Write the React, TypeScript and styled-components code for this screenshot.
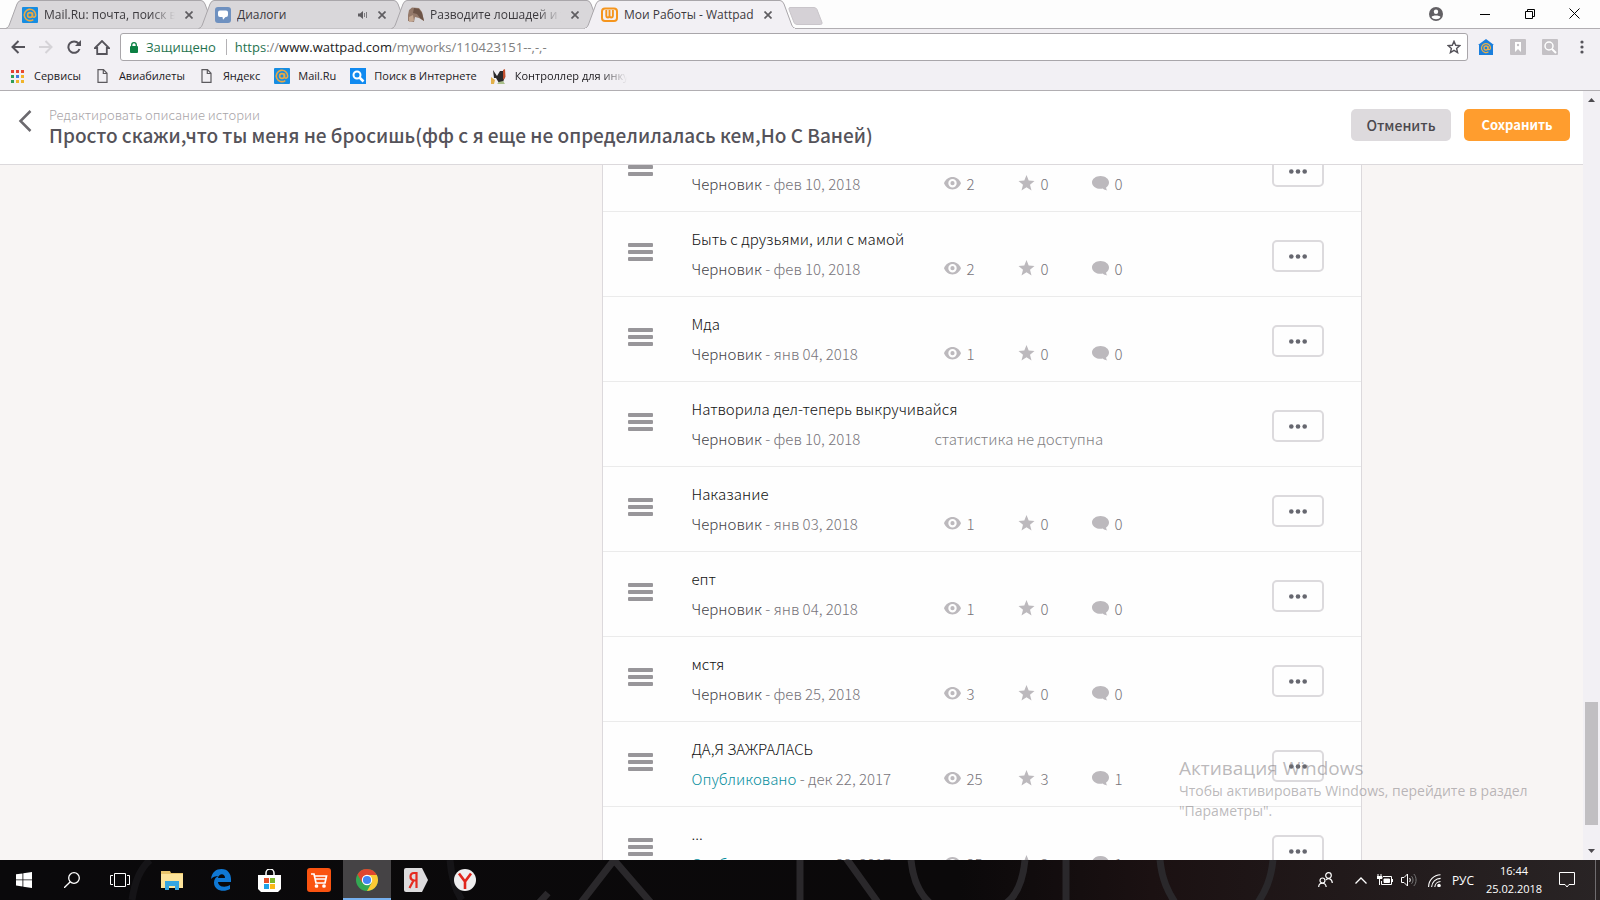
import React, { useLayoutEffect, useRef } from "react";
import styled, { createGlobalStyle, css } from "styled-components";

const UI_FONT = `"Open Sans", "Noto Sans", sans-serif`;
const PAGE_FONT = `"Noto Sans CJK SC", "Noto Sans", sans-serif`;

const GlobalStyle = createGlobalStyle`
  *, *::before, *::after { box-sizing: border-box; }
  body { margin: 0; font-family: ${UI_FONT}; font-size: 12px; color: #222; overflow: hidden; }
  button { font: inherit; color: inherit; background: none; border: 0; padding: 0; cursor: pointer; }
  a { color: inherit; text-decoration: none; }
  h1, h2, p, ul { margin: 0; padding: 0; font-weight: 400; }
  ul { list-style: none; }
  svg { display: block; flex: none; }
`;

const Desktop = styled.div`
  display: flex;
  flex-direction: column;
  height: 100vh;
  position: relative;
  background: #fff;
`;

/* ---------- tab strip ---------- */

const TabStrip = styled.div`
  display: flex;
  height: 29px;
  padding-left: 5px;
  border-bottom: 1px solid #b1aeb2;
  background: #fdfdfd;
`;

const TabBox = styled.div<{ $active?: boolean }>`
  position: relative;
  z-index: ${(p) => (p.$active ? 2 : 1)};
  width: 212px;
  height: 29px;
  margin-right: -19px;
  flex: none;
  display: flex;
  align-items: center;
  padding: 0 20px 0 17px;
  gap: 6px;
`;

const TabShape = styled.svg`
  position: absolute;
  inset: 0;
  z-index: -1;
`;

const TabTitle = styled.button<{ $fade?: boolean }>`
  flex: 1;
  min-width: 0;
  height: 22px;
  text-align: left;
  line-height: 22px;
  white-space: nowrap;
  overflow: hidden;
  color: #3c3a3e;
  ${(p) =>
    p.$fade &&
    css`
      mask-image: linear-gradient(to right, #000 calc(100% - 24px), transparent);
    `}
`;

const TabClose = styled.button`
  width: 16px;
  height: 16px;
  display: grid;
  place-items: center;
`;

const NewTab = styled.button`
  margin: 7px 0 0 11px;
  width: 36px;
  height: 18px;
`;

const WindowControls = styled.div`
  margin: 0 3px 0 auto;
  display: flex;
  align-items: center;
  height: 27px;
`;

const WindowButton = styled.button<{ $wide?: boolean }>`
  width: ${(p) => (p.$wide ? 53 : 45)}px;
  height: 26px;
  display: grid;
  place-items: center;
`;

/* ---------- toolbar ---------- */

const Toolbar = styled.form`
  display: flex;
  align-items: center;
  height: 36px;
  margin: 0;
  padding: 0 4px;
  background: #f2f0f4;
`;

const NavButton = styled.button`
  width: 28px;
  height: 28px;
  display: grid;
  place-items: center;
`;

const AddressBox = styled.div`
  flex: 1;
  display: flex;
  align-items: center;
  height: 28px;
  margin: 0 4px;
  padding: 0 6px 0 9px;
  border: 1px solid #a9a6aa;
  border-radius: 3px;
  background: #fff;
  font-size: 13px;
`;

const Secure = styled.button`
  display: flex;
  align-items: center;
  gap: 8px;
  color: #1f7350;
  padding-right: 10px;
  margin-right: 8px;
  border-right: 1px solid #b4b2b5;
  height: 16px;
  line-height: 16px;
`;

const Url = styled.a`
  flex: 1;
  color: #808080;
  line-height: 20px;
`;

const Scheme = styled.span`
  color: #1f7350;
`;

const Host = styled.span`
  color: #222;
`;

const Extensions = styled.div`
  display: flex;
  gap: 4px;
  align-items: center;
`;

/* ---------- bookmarks ---------- */

const Bookmarks = styled.nav`
  display: flex;
  align-items: center;
  height: 26px;
  padding: 0 10px 3px;
  gap: 14px;
  background: #f2f0f4;
  border-bottom: 1px solid #b1aeb2;
`;

const Bookmark = styled.a<{ $fade?: boolean }>`
  display: flex;
  align-items: center;
  gap: 8px;
  font-size: 11px;
  line-height: 18px;
  white-space: nowrap;
  color: #1c1a1e;
  ${(p) =>
    p.$fade &&
    css`
      width: 140px;
      overflow: hidden;
      mask-image: linear-gradient(to right, #000 calc(100% - 30px), transparent calc(100% - 4px));
    `}
`;

const BookmarkIcon = styled.span`
  width: 16px;
  flex: none;
  display: grid;
  place-items: center;
`;

/* ---------- web page ---------- */

const Viewport = styled.div`
  flex: 1;
  min-height: 0;
  display: flex;
`;

const Page = styled.div`
  flex: 1;
  min-width: 0;
  display: flex;
  flex-direction: column;
  background: #f8f5f4;
  font-family: ${PAGE_FONT};
`;

const StoryHeader = styled.header`
  display: flex;
  align-items: center;
  height: 74px;
  padding: 0 13px 0 18px;
  background: #fff;
  border-bottom: 1px solid #dcd9dc;
`;

const BackButton = styled.button`
  width: 31px;
  height: 36px;
  padding-bottom: 14px;
`;

const StoryTitles = styled.div`
  flex: 1;
  min-width: 0;
  padding-bottom: 4px;
`;

const Kicker = styled.p`
  font-size: 13px;
  font-weight: 300;
  line-height: 18px;
  color: #a8a4a8;
`;

const StoryTitle = styled.h1`
  font-size: 19px;
  font-weight: 500;
  line-height: 22px;
  color: #55535a;
  white-space: nowrap;
`;

const HeaderButton = styled.button<{ $primary?: boolean }>`
  height: 32px;
  width: ${(p) => (p.$primary ? 106 : 100)}px;
  margin: 0 0 6px 13px;
  border-radius: 5px;
  font-size: ${(p) => (p.$primary ? 13 : 14)}px;
  font-weight: ${(p) => (p.$primary ? 700 : 500)};
  color: ${(p) => (p.$primary ? "#fff" : "#4b494e")};
  background: ${(p) => (p.$primary ? "#ff9d2e" : "#dddadd")};
`;

const Scroller = styled.main`
  flex: 1;
  min-height: 0;
  overflow-y: auto;
  scrollbar-width: none;
`;

const Container = styled.div`
  max-width: 1140px;
  margin: 0 auto;
  display: flex;
  justify-content: flex-end;
`;

const PartList = styled.ul`
  width: 760px;
  background: #fefefe;
  border: solid #dcd9dc;
  border-width: 0 1px;
`;

const PartRow = styled.li`
  display: flex;
  align-items: center;
  height: 85px;
  padding: 0 37px 0 25px;
  border-bottom: 1px solid #ebebeb;
`;

const DragHandle = styled.button`
  width: 25px;
  height: 18px;
  margin: 0 39px 4px 0;
`;

const PartInfo = styled.div`
  flex: 1;
`;

const PartName = styled.h2`
  min-height: 22px;
  font-size: 15px;
  font-weight: 300;
  line-height: 22px;
  color: #111;
  margin-bottom: 8px;
`;

const MetaLine = styled.div`
  display: flex;
  font-size: 15px;
  font-weight: 300;
  line-height: 22px;
  color: #77747a;
`;

const Status = styled.p`
  width: 243px;
  font-weight: 300;
`;

const StatusLabel = styled.span<{ $published?: boolean }>`
  color: ${(p) => (p.$published ? "#0a8f9e" : "#444248")};
`;

const Stat = styled.span`
  display: flex;
  align-items: center;
  gap: 6px;
  width: 74px;
  &:first-of-type { margin-left: 9px; }
  svg { margin-bottom: 2px; }
`;

const NoStats = styled.span`
  color: #817e83;
`;

const MoreButton = styled.button`
  width: 52px;
  height: 32px;
  margin-top: 4px;
  border: 2px solid #dcdadd;
  border-radius: 5px;
  display: grid;
  place-items: center;
`;

const Scrollbar = styled.div`
  width: 17px;
  display: flex;
  flex-direction: column;
  align-items: center;
  background: #f2f0f4;
  padding: 7px 0;
`;

const Thumb = styled.div`
  margin-top: auto;
  margin-bottom: 24px;
  width: 13px;
  height: 123px;
  background: #c1bfc2;
`;

/* ---------- watermark ---------- */

const Watermark = styled.aside`
  position: absolute;
  right: 51px;
  bottom: 79px;
  width: 370px;
  z-index: 3;
  pointer-events: none;
  color: rgba(120, 116, 120, 0.5);
`;

const WatermarkTitle = styled.p`
  font-size: 19px;
  line-height: 26px;
`;

const WatermarkText = styled.p`
  font-size: 14px;
  line-height: 20px;
`;

/* ---------- taskbar ---------- */

const Taskbar = styled.footer`
  position: relative;
  z-index: 0;
  height: 40px;
  display: flex;
  align-items: stretch;
  background: #0b090b;
  color: #fff;
  overflow: hidden;
`;

const Wallpaper = styled.svg`
  position: absolute;
  inset: 0;
  z-index: -1;
`;

const Pinned = styled.div`
  display: flex;
  margin-left: 3px;
`;

const TaskButton = styled.button<{ $active?: boolean; $wide?: boolean }>`
  width: ${(p) => (p.$wide ? 49 : 48)}px;
  display: grid;
  place-items: center;
  ${(p) =>
    p.$active &&
    css`
      background: #454345;
      box-shadow: inset 0 -2px #76b0ee;
    `}
`;

const Tray = styled.div`
  margin-left: auto;
  padding-right: 10px;
  display: flex;
  align-items: center;
`;

const TrayButton = styled.button<{ $w: number }>`
  width: ${(p) => p.$w}px;
  height: 40px;
  display: grid;
  place-items: center;
  color: #fff;
`;

const Clock = styled.button`
  width: 70px;
  text-align: center;
  font-size: 11px;
  line-height: 18px;
`;

const ShowDesktop = styled.button`
  width: 5px;
  height: 40px;
  border-left: 1px solid #6f6c6f;
`;

/* ---------- icons ---------- */

const CrossIcon = () => (
  <svg width="8" height="8" viewBox="0 0 8 8" stroke="#5f5d61" strokeWidth="1.7">
    <path d="M.5.5l7 7M7.5.5l-7 7" />
  </svg>
);

const MailIcon = () => (
  <svg width="16" height="16" viewBox="0 0 16 16" fill="none">
    <rect width="16" height="16" rx="1" fill="#168de2" />
    <g stroke="#e9a844" strokeWidth="1.6">
      <circle cx="8" cy="8" r="2.4" />
      <path d="M10.500 5.500v3.200c0 2.200 3.200 2 3.200-.7a5.700 5.700 0 1 0-2.400 4.600" />
    </g>
  </svg>
);

const DialogIcon = () => (
  <svg width="16" height="16" viewBox="0 0 16 16">
    <rect width="16" height="16" rx="3" fill="#6f91c0" />
    <path fill="#fff" d="M5 3.500h6a2 2 0 0 1 2 2V8a2 2 0 0 1-2 2h-.5L8 12.800 7.500 10H5a2 2 0 0 1-2-2V5.500a2 2 0 0 1 2-2z" />
  </svg>
);

const HorseIcon = () => (
  <svg width="16" height="16" viewBox="0 0 16 16">
    <path fill="#94796a" d="M1 3l3-2.500L11 1l3 4 2 9-5-3-4-1-1 5-6-1L0 8z" />
    <path fill="#6d5447" d="M6 1l5 1 3 4 2 8-4-3-3-4-4-1z" />
    <path fill="#c3a690" d="M1 10l4-2 1 6-5 1z" />
  </svg>
);

const WattpadIcon = () => (
  <svg width="17" height="16" viewBox="0 0 17 16" fill="none" stroke="#f5951d">
    <rect x="1" y="1.500" width="15" height="12.500" rx="3" strokeWidth="2" />
    <path d="M5.300 3v5.500q0 2 1.600 2t1.600-2V3M8.500 8.500q0 2 1.700 2t1.700-2V3" strokeWidth="1.900" />
  </svg>
);

const SpeakerIcon = () => (
  <svg width="10" height="10" viewBox="0 0 10 10">
    <path fill="#5f5d61" d="M0 3.500h2L5 1v8L2 6.500H0z" />
    <path d="M6.500 3v4M8.500 2v6" stroke="#7d7b7f" />
  </svg>
);

const FileIcon = () => (
  <svg width="11" height="14" viewBox="0 0 11 14" fill="none" stroke="#5c5a5e" strokeWidth="1.200">
    <path d="M1 .7h5.500L10 4.300v9H1zM6.300.7v3.800H10" />
  </svg>
);

const AppsIcon = () => {
  const colors = ["#e34133", "#e34133", "#e9492f", "#2f9e57", "#3b7ce0", "#f0b429", "#2f9e57", "#f0b429", "#f0b429"];
  return (
    <svg width="14" height="13" viewBox="0 0 14 13">
      {colors.map((c, i) => (
        <rect key={i} x={(i % 3) * 5} y={Math.floor(i / 3) * 5} width="3" height="3" fill={c} />
      ))}
    </svg>
  );
};

const SearchBookmarkIcon = () => (
  <svg width="16" height="16" viewBox="0 0 16 16" fill="none">
    <rect width="16" height="16" fill="#118af0" />
    <circle cx="7" cy="7" r="3.500" stroke="#fff" strokeWidth="2" />
    <path d="M9.500 9.500l4 4" stroke="#fff" strokeWidth="2.500" />
  </svg>
);

const RoosterIcon = () => (
  <svg width="16" height="15" viewBox="0 0 16 15">
    <path fill="#2b2a2c" d="M2 1l4 6 3-5 3 0 2 6-2 5-4 1-3-5-2 0z" />
    <path fill="#c2502f" d="M12 1l2-1 .5 8-2.500 3z" />
    <path fill="#e2b04a" d="M0 8l4 3-1 4H0z" />
    <path fill="#a9bf8a" d="M8 13l4-1 2 3H6z" />
  </svg>
);

const EyeIcon = () => (
  <svg width="17" height="13" viewBox="0 0 17 13">
    <path
      fill="#bcb9bd"
      fillRule="evenodd"
      d="M8.500 0C4.600 0 1.500 2.500 0 6.200c1.500 3.700 4.600 6.200 8.500 6.200s7-2.500 8.500-6.200C15.500 2.500 12.400 0 8.500 0zm0 10.400a4.200 4.200 0 1 1 0-8.400 4.200 4.200 0 0 1 0 8.400zm0-2.100a2.100 2.100 0 1 0 0-4.200 2.100 2.100 0 0 0 0 4.200z"
    />
  </svg>
);

const StarIcon = () => (
  <svg width="17" height="16" viewBox="0 0 17 16">
    <path fill="#bcb9bd" d="M8.500 0l2.200 5.600 5.800.4-4.500 3.700 1.500 5.800-5-3.200-5 3.200L5 9.700.5 6l5.800-.4z" />
  </svg>
);

const CommentIcon = () => (
  <svg width="17" height="15" viewBox="0 0 17 15">
    <path fill="#bcb9bd" d="M8.500 0C3.800 0 0 2.900 0 6.400s3.800 6.400 8.500 6.400c.8 0 1.500-.1 2.200-.2 1.200 1 2.600 1.700 4.600 1.800-.8-.8-1.200-1.800-1.200-3 1.800-1.200 2.900-3 2.900-5C17 2.900 13.200 0 8.500 0z" />
  </svg>
);

const HandleIcon = () => (
  <svg width="25" height="18" viewBox="0 0 25 18" fill="#98969a">
    <rect width="25" height="4" rx="1" />
    <rect y="7" width="25" height="4" rx="1" />
    <rect y="14" width="25" height="4" rx="1" />
  </svg>
);

const DotsIcon = () => (
  <svg width="18" height="5" viewBox="0 0 18 5" fill="#66676f">
    <circle cx="2.300" cy="2.500" r="2.300" />
    <circle cx="9" cy="2.500" r="2.300" />
    <circle cx="15.700" cy="2.500" r="2.300" />
  </svg>
);

/* ---------- data ---------- */

type Part = { name?: string; date: string; published?: boolean; stats?: [number, number, number] };

const parts: Part[] = [
  { date: "фев 10, 2018", stats: [2, 0, 0] },
  { name: "Быть с друзьями, или с мамой", date: "фев 10, 2018", stats: [2, 0, 0] },
  { name: "Мда", date: "янв 04, 2018", stats: [1, 0, 0] },
  { name: "Натворила дел-теперь выкручивайся", date: "фев 10, 2018" },
  { name: "Наказание", date: "янв 03, 2018", stats: [1, 0, 0] },
  { name: "епт", date: "янв 04, 2018", stats: [1, 0, 0] },
  { name: "мстя", date: "фев 25, 2018", stats: [3, 0, 0] },
  { name: "ДА,Я ЗАЖРАЛАСЬ", date: "дек 22, 2017", published: true, stats: [25, 3, 1] },
  { name: "...", date: "дек 22, 2017", published: true, stats: [25, 3, 1] },
];

type TabData = { title: string; icon: React.ReactNode; active?: boolean; fade?: boolean; audio?: boolean };

const tabs: TabData[] = [
  { title: "Mail.Ru: почта, поиск в", icon: <MailIcon />, fade: true },
  { title: "Диалоги", icon: <DialogIcon />, audio: true },
  { title: "Разводите лошадей и уп", icon: <HorseIcon />, fade: true },
  { title: "Мои Работы - Wattpad", icon: <WattpadIcon />, active: true },
];

const Tab = ({ title, icon, active, fade, audio }: TabData) => (
  <TabBox $active={active}>
    <TabShape width="212" height="29" viewBox="0 0 212 29">
      <path
        d="M.5 28.500C3 28 4 26 5 23L12 4q1.500-3.500 4-3.500h180q2.500 0 4 3.500l7 19c1 3 2 5 4.500 5.500"
        fill={active ? "#f2f0f4" : "#d9d7da"}
        stroke="#a9a6aa"
      />
      {active && <path d="M1 28.500h210" stroke="#f2f0f4" />}
    </TabShape>
    {icon}
    <TabTitle $fade={fade}>{title}</TabTitle>
    {audio && <SpeakerIcon />}
    <TabClose aria-label="Закрыть вкладку">
      <CrossIcon />
    </TabClose>
  </TabBox>
);

const PartItem = ({ part }: { part: Part }) => (
  <PartRow>
    <DragHandle aria-label="Переместить">
      <HandleIcon />
    </DragHandle>
    <PartInfo>
      <PartName>{part.name}</PartName>
      <MetaLine>
        <Status>
          <StatusLabel $published={part.published}>{part.published ? "Опубликовано" : "Черновик"}</StatusLabel>
          {" - " + part.date}
        </Status>
        {part.stats ? (
          <>
            <Stat><EyeIcon />{part.stats[0]}</Stat>
            <Stat><StarIcon />{part.stats[1]}</Stat>
            <Stat><CommentIcon />{part.stats[2]}</Stat>
          </>
        ) : (
          <NoStats>статистика не доступна</NoStats>
        )}
      </MetaLine>
    </PartInfo>
    <MoreButton aria-label="Ещё">
      <DotsIcon />
    </MoreButton>
  </PartRow>
);

export default function App() {
  const scroller = useRef<HTMLElement>(null);

  useLayoutEffect(() => {
    if (scroller.current) scroller.current.scrollTop = 38;
  }, []);

  return (
    <Desktop>
      <GlobalStyle />
      <TabStrip>
        {tabs.map((t) => (
          <Tab key={t.title} {...t} />
        ))}
        <NewTab aria-label="Новая вкладка">
          <svg width="36" height="18" viewBox="0 0 36 18">
            <path d="M2 .5h24q2 0 3 2l5 13q.5 2-1.500 2H9q-2 0-3-2l-5-13Q.5.5 2 .5z" fill="#d5d1d6" stroke="#c9c5ca" />
          </svg>
        </NewTab>
        <WindowControls>
          <WindowButton $wide aria-label="Профиль">
            <svg width="14" height="14" viewBox="0 0 14 14">
              <circle cx="7" cy="7" r="7" fill="#626064" />
              <circle cx="7" cy="4.800" r="2.200" fill="#fff" />
              <path d="M2.500 10c1-2 8-2 9 0-1.500 3-7.500 3-9 0z" fill="#fff" />
            </svg>
          </WindowButton>
          <WindowButton aria-label="Свернуть">
            <svg width="10" height="10"><path d="M0 5.500h10" stroke="#000" /></svg>
          </WindowButton>
          <WindowButton aria-label="Восстановить">
            <svg width="10" height="10" fill="none" stroke="#000"><path d="M.5 2.500h7v7h-7zM2.500 2.500v-2h7v7h-2" /></svg>
          </WindowButton>
          <WindowButton aria-label="Закрыть">
            <svg width="11" height="11" stroke="#000"><path d="M.5.5l10 10M10.500.5l-10 10" /></svg>
          </WindowButton>
        </WindowControls>
      </TabStrip>

      <Toolbar onSubmit={(e) => e.preventDefault()}>
        <NavButton type="button" aria-label="Назад">
          <svg width="14" height="14" viewBox="0 0 14 14" fill="none" stroke="#55535a" strokeWidth="2"><path d="M14 7H1.500M7.500 1l-6 6 6 6" /></svg>
        </NavButton>
        <NavButton type="button" aria-label="Вперёд">
          <svg width="14" height="14" viewBox="0 0 14 14" fill="none" stroke="#d5d3d7" strokeWidth="2"><path d="M0 7h12.500M6.500 1l6 6-6 6" /></svg>
        </NavButton>
        <NavButton type="button" aria-label="Обновить">
          <svg width="14" height="14" viewBox="0 0 14 14" fill="none" stroke="#55535a" strokeWidth="2"><path d="M11.500 3.500A5.700 5.700 0 1 0 12.500 9" /><path d="M14 0v6H8z" fill="#55535a" stroke="none" /></svg>
        </NavButton>
        <NavButton type="button" aria-label="Домой">
          <svg width="16" height="15" viewBox="0 0 16 15" fill="none" stroke="#55535a" strokeWidth="1.800"><path d="M1 8l7-7 7 7h-2.200v6H3.200V8z" /></svg>
        </NavButton>
        <AddressBox>
          <Secure type="button">
            <svg width="8" height="11" viewBox="0 0 8 11"><rect y="4" width="8" height="7" rx="1" fill="#0b8043" /><path d="M1.700 4.500V3a2.300 2.300 0 0 1 4.600 0v1.500" fill="none" stroke="#0b8043" strokeWidth="1.300" /></svg>
            Защищено
          </Secure>
          <Url href="#">
            <Scheme>https</Scheme>://<Host>www.wattpad.com</Host>/myworks/110423151--,-,-
          </Url>
          <svg width="14" height="14" viewBox="0 0 14 14" fill="none" stroke="#55535a" strokeWidth="1.400"><path d="M7 1.300l1.700 4 4.100.3-3.200 2.800 1 4.200L7 10.300l-3.600 2.300 1-4.200L1.200 5.600l4.100-.3z" /></svg>
        </AddressBox>
        <Extensions>
          <NavButton type="button" aria-label="Mail.Ru">
            <svg width="16" height="16" viewBox="0 0 16 16" fill="none"><path d="M8 0l8 6h-1v10H1V6H0z" fill="#1a7fdd" /><circle cx="8" cy="9" r="2" stroke="#e9b04a" strokeWidth="1.300" /><path d="M10 7v2.500c0 1.800 2.500 1.500 2.500-.5A4.500 4.500 0 1 0 10.500 12.800" stroke="#e9b04a" strokeWidth="1.200" /></svg>
          </NavButton>
          <NavButton type="button" aria-label="Закладки">
            <svg width="16" height="16" viewBox="0 0 16 16"><rect width="16" height="16" rx="1" fill="#c4c1c5" /><path d="M5 3h6v10l-3-3-3 3z" fill="#fff" /><circle cx="8" cy="6" r="1.200" fill="#c4c1c5" /></svg>
          </NavButton>
          <NavButton type="button" aria-label="Поиск">
            <svg width="16" height="16" viewBox="0 0 16 16" fill="none"><rect width="16" height="16" rx="1" fill="#c4c1c5" /><circle cx="7" cy="7" r="4" stroke="#fff" strokeWidth="1.500" /><path d="M10 10l4 4" stroke="#fff" strokeWidth="2" /></svg>
          </NavButton>
          <NavButton type="button" aria-label="Меню">
            <svg width="4" height="14" viewBox="0 0 4 14" fill="#55535a"><circle cx="2" cy="2" r="1.600" /><circle cx="2" cy="7" r="1.600" /><circle cx="2" cy="12" r="1.600" /></svg>
          </NavButton>
        </Extensions>
      </Toolbar>

      <Bookmarks>
        <Bookmark href="#"><BookmarkIcon><AppsIcon /></BookmarkIcon>Сервисы</Bookmark>
        <Bookmark href="#"><BookmarkIcon><FileIcon /></BookmarkIcon>Авиабилеты</Bookmark>
        <Bookmark href="#"><BookmarkIcon><FileIcon /></BookmarkIcon>Яндекс</Bookmark>
        <Bookmark href="#"><BookmarkIcon><MailIcon /></BookmarkIcon>Mail.Ru</Bookmark>
        <Bookmark href="#"><BookmarkIcon><SearchBookmarkIcon /></BookmarkIcon>Поиск в Интернете</Bookmark>
        <Bookmark href="#" $fade><BookmarkIcon><RoosterIcon /></BookmarkIcon>Контроллер для инку</Bookmark>
      </Bookmarks>

      <Viewport>
        <Page>
          <StoryHeader>
            <BackButton aria-label="Назад">
              <svg width="14" height="22" viewBox="0 0 14 22" fill="none" stroke="#6b696e" strokeWidth="2.500"><path d="M12.500 1l-10 10 10 10" /></svg>
            </BackButton>
            <StoryTitles>
              <Kicker>Редактировать описание истории</Kicker>
              <StoryTitle>Просто скажи,что ты меня не бросишь(фф с я еще не определилалась кем,Но С Ваней)</StoryTitle>
            </StoryTitles>
            <HeaderButton>Отменить</HeaderButton>
            <HeaderButton $primary>Сохранить</HeaderButton>
          </StoryHeader>
          <Scroller ref={scroller}>
            <Container>
              <PartList>
                {parts.map((p, i) => (
                  <PartItem key={i} part={p} />
                ))}
              </PartList>
            </Container>
          </Scroller>
        </Page>
        <Scrollbar>
          <svg width="7" height="4" fill="#4d4b4f"><path d="M0 4l3.500-4L7 4z" /></svg>
          <Thumb />
          <svg width="7" height="4" fill="#4d4b4f"><path d="M0 0l3.500 4L7 0z" /></svg>
        </Scrollbar>
      </Viewport>

      <Watermark>
        <WatermarkTitle>Активация Windows</WatermarkTitle>
        <WatermarkText>Чтобы активировать Windows, перейдите в раздел "Параметры".</WatermarkText>
      </Watermark>

      <Taskbar>
        <Wallpaper width="100%" height="40" fill="none">
          <defs>
            <linearGradient id="shade" x1="0" x2="1"><stop offset="0" stopColor="#0a090b" /><stop offset=".6" stopColor="#0b090a" /><stop offset=".72" stopColor="#1b1112" /><stop offset="1" stopColor="#292425" /></linearGradient>
          </defs>
          <rect width="100%" height="40" fill="url(#shade)" />
          <g stroke="#2a282b" strokeWidth="7">
            <path d="M538 44l10-11M580 44l34-44 38 44M800 0v40M846-2l33 46M911 0c2 20 8 34 20 44M1025 0c-2 20-8 36-20 44M1066 0v40M1160 0c2 20 8 32 16 44M1273 0c-2 20-8 32-16 44" />
            <path d="M150 0q-14 12-18 40M450 0q2 26 12 40" stroke="#151417" />
          </g>
        </Wallpaper>
        <TaskButton aria-label="Пуск">
          <svg width="16" height="16" viewBox="0 0 16 16" fill="#fff"><path d="M0 2.300L6.500 1.400v6.100H0zM7.300 1.300L16 0v7.500H7.300zM0 8.300h6.500v6.200L0 13.600zM7.300 8.300H16V16l-8.700-1.300z" /></svg>
        </TaskButton>
        <TaskButton aria-label="Поиск">
          <svg width="16" height="16" viewBox="0 0 16 16" fill="none" stroke="#fff" strokeWidth="1.300"><circle cx="10" cy="6" r="5.300" /><path d="M6.300 9.700L0 16" /></svg>
        </TaskButton>
        <TaskButton aria-label="Представление задач">
          <svg width="20" height="14" viewBox="0 0 20 14" fill="none" stroke="#fff"><path d="M4.500.5h11v13h-11zM3 2.500H.5v9H3M17 2.500h2.500v9H17" /></svg>
        </TaskButton>
        <Pinned>
          <TaskButton $wide aria-label="Проводник">
            <svg width="22" height="19" viewBox="0 0 22 19"><path d="M0 0h9l1 2h12v15H0z" fill="#e9c46a" /><path d="M0 3h22v14H0z" fill="#fde39a" /><path d="M4 19v-9h14v9h-4v-4H8v4z" fill="#36a5e0" /></svg>
          </TaskButton>
          <TaskButton $wide aria-label="Edge">
            <svg width="20" height="22" viewBox="0 0 20 22"><path fill="#0f78d4" d="M0 10C1 3 5 0 10.500 0 17 0 20 5 20 10v3H7c.3 5 7 6 12 3v4c-6 3.500-16 2-16-6.500 0-3.500 2-5.500 4.500-6.500C4.500 7 1.500 8 0 10zm7-1h7c0-5-6-5-7 0z" /></svg>
          </TaskButton>
          <TaskButton $wide aria-label="Магазин">
            <svg width="24" height="23" viewBox="0 0 24 23"><path d="M8 7V4a4 4 0 0 1 8 0v3" fill="none" stroke="#fff" strokeWidth="1.500" /><path d="M0 6h23v14l-3 3H3l-3-3z" fill="#fff" /><path d="M6 9h5v5H6z" fill="#e8502b" /><path d="M12 9h5v5h-5z" fill="#7cb72b" /><path d="M6 15h5v5H6z" fill="#20a2e8" /><path d="M12 15h5v5h-5z" fill="#fab91a" /></svg>
          </TaskButton>
          <TaskButton $wide aria-label="Покупки">
            <svg width="24" height="24" viewBox="0 0 24 24" fill="none" stroke="#fff" strokeWidth="1.700"><rect width="24" height="24" rx="3" fill="#fa5310" stroke="none" /><path d="M4 6h3l2 9h9l1.500-7H8M8 11h11" /><circle cx="9.500" cy="18" r="1" /><circle cx="17" cy="18" r="1" /></svg>
          </TaskButton>
          <TaskButton $active aria-label="Chrome">
            <svg width="22" height="22" viewBox="0 0 22 22"><circle cx="11" cy="11" r="11" fill="#34a853" /><path d="M1.500 5.500L6.200 13.700 11 6h9.800a11 11 0 0 0-19.300-.5z" fill="#e0452f" /><path d="M11 6h9.800A11 11 0 0 1 11 22l4.500-8z" fill="#fcc934" /><circle cx="11" cy="11" r="5.200" fill="#fff" /><circle cx="11" cy="11" r="4.100" fill="#4285f4" /></svg>
          </TaskButton>
          <TaskButton $wide aria-label="Яндекс">
            <svg width="24" height="24" viewBox="0 0 24 24"><path d="M2 0h16l6 12-6 12H2q-2 0-2-2V2q0-2 2-2z" fill="#dddcde" /><path d="M12.500 20V5H10Q6.500 5 6.500 8.700 6.500 12 10 12.500h2.500M9.500 12.500L5.500 20" fill="none" stroke="#e52b20" strokeWidth="2.200" /></svg>
          </TaskButton>
          <TaskButton $wide aria-label="Яндекс.Браузер">
            <svg width="22" height="22" viewBox="0 0 22 22"><circle cx="11" cy="11" r="11" fill="#efeeef" /><path d="M5 4.500l6 8 6-8M11 12v8" fill="none" stroke="#e0261c" strokeWidth="2.600" /></svg>
          </TaskButton>
        </Pinned>
        <Tray>
          <TrayButton $w={48} aria-label="Люди">
            <svg width="15" height="16" viewBox="0 0 15 16" fill="none" stroke="#fff" strokeWidth="1.200"><circle cx="10.500" cy="3.500" r="2.800" /><circle cx="4.500" cy="8.500" r="2.500" /><path d="M.7 15c0-5 7-5 7.500 0M8 8c2-2.500 6-1.500 6.300 3" /></svg>
          </TrayButton>
          <TrayButton $w={24} aria-label="Скрытые значки">
            <svg width="12" height="7" fill="none" stroke="#fff" strokeWidth="1.300"><path d="M.5 6.500L6 1l5.500 5.500" /></svg>
          </TrayButton>
          <TrayButton $w={24} aria-label="Батарея">
            <svg width="16" height="12" viewBox="0 0 16 12" fill="none" stroke="#fff"><path d="M6 2.500h8.500v8H4.500V7" /><path d="M15.500 5v3M1 0v2.500M4 0v2.500M2.500 5v6" /><path d="M0 2.500h5v2H0z" fill="#fff" /><path d="M7 5h5.500v3.500H7z" fill="#fff" /></svg>
          </TrayButton>
          <TrayButton $w={24} aria-label="Громкость">
            <svg width="16" height="14" viewBox="0 0 16 14" fill="none" stroke="#fff"><path d="M.5 4.500h2.500L6.500 1v12L3 9.500H.5zM8.500 5c1 1 1 3 0 4" /><path d="M10.500 3.200c2 2 2 5.600 0 7.600M12.800 1c3 3 3 9 0 12" stroke="#777" /></svg>
          </TrayButton>
          <TrayButton $w={26} aria-label="Сеть">
            <svg width="13" height="13" viewBox="0 0 13 13" fill="none" stroke="#fff" strokeWidth="1.100"><path d="M.6 13A12 12 0 0 1 12.500.8M3.600 13a9 9 0 0 1 9-8.600M6.800 13a6 6 0 0 1 5.700-5.500" /><circle cx="11" cy="11.500" r="1.200" fill="#fff" /></svg>
          </TrayButton>
          <TrayButton $w={32}>РУС</TrayButton>
          <Clock>
            16:44
            <br />
            25.02.2018
          </Clock>
          <TrayButton $w={36} aria-label="Уведомления">
            <svg width="16" height="16" viewBox="0 0 16 16" fill="none" stroke="#fff"><path d="M.5.500h15v12H10L8 15l-2-2.500H.5z" /></svg>
          </TrayButton>
        </Tray>
        <ShowDesktop aria-label="Свернуть все окна" />
      </Taskbar>
    </Desktop>
  );
}
